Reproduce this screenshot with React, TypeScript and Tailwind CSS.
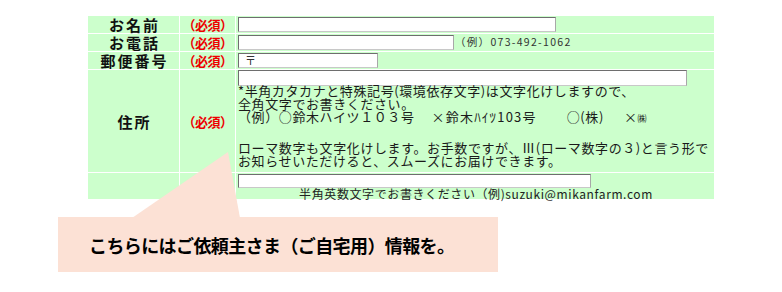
const jp = "font-['Noto_Sans_CJK_JP','Noto_Sans',sans-serif]";

function Label({ children }: { children: React.ReactNode }) {
  return (
    <div className="flex items-center justify-center bg-[#ccffcc] pl-[2px] text-[15px] font-bold leading-none tracking-[2px] text-[#111]">
      {children}
    </div>
  );
}

function Required() {
  return (
    <div className="flex items-center justify-center bg-[#ccffcc] text-[13px] font-bold leading-none tracking-[-0.5px] text-[#ee0000]">
      （必須）
    </div>
  );
}

function Field({ width, value = "" }: { width: string; value?: string }) {
  return (
    <div
      className={`${width} h-[15px] border border-t-[#6e6e6e] border-l-[#6e6e6e] border-r-[#a8a8a8] border-b-[#c8c8c8] bg-white pl-[6px] text-[11px] leading-[13px] text-[#333]`}
    >
      {value}
    </div>
  );
}

export default function App() {
  return (
    <div className={`relative h-[292px] w-[782px] overflow-hidden bg-white ${jp}`}>
      <div className="ml-[88px] pt-[16px]">
        <div className="grid w-[626px] grid-cols-[91px_55px_478px] grid-rows-[17px_17px_17px_102px_26px] gap-px bg-white">
          <Label>お名前</Label>
          <Required />
          <div className="flex items-center bg-[#ccffcc] pl-[2px]">
            <Field width="w-[318px]" />
          </div>

          <Label>お電話</Label>
          <Required />
          <div className="flex items-center gap-[1px] bg-[#ccffcc] pl-[2px]">
            <Field width="w-[216px]" />
            <span className="text-[10.5px] leading-none tracking-[1.3px] text-[#333]">（例）073-492-1062</span>
          </div>

          <Label>郵便番号</Label>
          <Required />
          <div className="flex items-center bg-[#ccffcc] pl-[2px]">
            <Field width="w-[140px]" value="〒" />
          </div>

          <Label>住所</Label>
          <Required />
          <div className="flex flex-col bg-[#ccffcc] pl-[2px]">
            <div className="h-[16px] w-[449px] border border-t-[#6e6e6e] border-l-[#6e6e6e] border-r-[#a8a8a8] border-b-[#c8c8c8] bg-white" />
            <div className="mt-[-2px] text-[13px] leading-[13px] tracking-[0.6px] text-[#1a1a1a]">
              <p>*半角カタカナと特殊記号(環境依存文字)は文字化けしますので、</p>
              <p>全角文字でお書きください。</p>
              <p className="whitespace-nowrap">
                （例）○鈴木ハイツ１０３号
                <span className="ml-[17px] tracking-[1.2px]">×鈴木ﾊｲﾂ103号</span>
                <span className="ml-[30px]">○(株)</span>
                <span className="ml-[20px]">
                  ×<span className="text-[9px]">㈱</span>
                </span>
              </p>
              <div className="h-[16px]" />
              <p>ローマ数字も文字化けします。お手数ですが、Ⅲ(ローマ数字の３)と言う形で</p>
              <p>お知らせいただけると、スムーズにお届けできます。</p>
            </div>
          </div>

          <div className="bg-[#ccffcc]" />
          <div className="bg-[#ccffcc]" />
          <div className="flex flex-col bg-[#ccffcc] pl-[2px] pt-px">
            <div className="h-[14px] w-[353px] border border-t-[#6e6e6e] border-l-[#6e6e6e] border-r-[#a8a8a8] border-b-[#c8c8c8] bg-white" />
            <p className="text-center text-[12px] leading-[11px] tracking-[0.6px] text-[#222]">
              半角英数文字でお書きください（例)suzuki@mikanfarm.com
            </p>
          </div>
        </div>
      </div>

      {/* callout */}
      <svg className="absolute left-0 top-0" width="782" height="292" aria-hidden>
        <polygon points="132,218 240,218 228,152" fill="#fce1d5" />
      </svg>
      <div className="absolute left-[58px] top-[217px] flex h-[55px] w-[440px] items-center bg-[#fce1d5] pl-[31px]">
        <span className="text-[18px] font-bold leading-none tracking-[-0.6px] text-black">
          こちらにはご依頼主さま（ご自宅用）情報を。
        </span>
      </div>
    </div>
  );
}
